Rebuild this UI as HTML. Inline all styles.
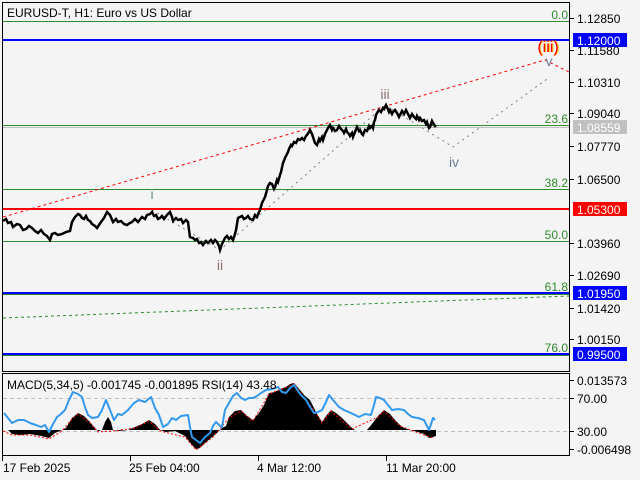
<!DOCTYPE html>
<html><head><meta charset="utf-8">
<style>
html,body{margin:0;padding:0;background:#f4f4f4;}
svg{display:block;font-family:"Liberation Sans","DejaVu Sans",sans-serif;}
</style></head>
<body>
<svg width="640" height="480" viewBox="0 0 640 480" xmlns="http://www.w3.org/2000/svg">
<rect width="640" height="480" fill="#f4f4f4"/>
<rect x="2.5" y="2.5" width="567" height="369" fill="none" stroke="#000" stroke-width="1"/>
<rect x="2.5" y="373.5" width="567" height="82" fill="none" stroke="#000" stroke-width="1"/>

<g stroke="#2e8b2e" stroke-width="1">
<line x1="3" y1="21.5" x2="569" y2="21.5"/>
<line x1="3" y1="125.5" x2="569" y2="125.5"/>
<line x1="3" y1="189.5" x2="569" y2="189.5"/>
<line x1="3" y1="241.5" x2="569" y2="241.5"/>
<line x1="3" y1="294.5" x2="569" y2="294.5"/>
<line x1="3" y1="355.5" x2="569" y2="355.5"/>
</g>
<line x1="3" y1="127.5" x2="569" y2="127.5" stroke="#c0c0c0" stroke-width="1"/>
<line x1="3" y1="40" x2="569" y2="40" stroke="#0000ff" stroke-width="2"/>
<line x1="3" y1="293" x2="569" y2="293" stroke="#0000ff" stroke-width="2"/>
<line x1="3" y1="354" x2="569" y2="354" stroke="#0000ff" stroke-width="2"/>
<line x1="3" y1="209" x2="569" y2="209" stroke="#ff0000" stroke-width="2"/>
<line x1="3" y1="318" x2="569" y2="296" stroke="#2e8b2e" stroke-width="1" stroke-dasharray="3,3"/>
<polyline points="3,217 545,60 569,72" fill="none" stroke="#ff0000" stroke-width="1" stroke-dasharray="3,3"/>
<polyline points="152,210 220,250 385,105 453,147 550,77" fill="none" stroke="#808080" stroke-width="1" stroke-dasharray="2,4"/>

<polyline fill="none" stroke="#000" stroke-width="2.5" stroke-linejoin="miter" points="3,221 6,219 8,223 11,222 13,227 17,224 20,225 23,230 26,229 29,226 32,228 35,231 38,233 41,230 44,234 47,236 50,240 52,234 55,233 58,235 62,234 66,232 70,231 72,222 75,217 78,214 80,215 82,218 84,219 86,216 88,220 90,221 92,224 95,226 97,228 99,225 101,222 104,218 107,212 109,214 110,215 113,222 116,219 118,222 121,221 124,224 127,225 130,223 132,222 135,219 138,222 142,217 145,219 147,215 150,214 152,212 154,216 156,215 158,219 160,218 162,216 164,219 167,215 170,212 172,217 173,221 176,218 178,220 181,219 183,223 186,220 188,222 189,230 190,237 193,238 195,240 197,239 199,243 201,242 203,245 206,241 208,243 211,240 213,243 215,240 217,242 219,246 220,250 222,244 225,238 227,236 229,239 231,237 233,240 235,234 236,230 237,224 238,218 240,217 242,216 244,219 246,218 248,216 250,219 253,220 255,215 257,217 259,212 260,210 262,203 264,199 265,197 267,190 268,186 270,183 272,184 274,189 275,187 277,180 278,182 280,175 281,172 283,163 285,158 286,156 288,152 289,149 291,145 292,146 294,142 296,143 298,139 300,140 302,138 304,140 306,136 307,135 309,132 310,130 312,134 313,137 315,143 317,145 319,139 320,141 322,137 323,140 325,134 326,132 328,128 330,125 332,130 333,128 335,131 337,130 339,126 341,129 343,131 344,133 346,129 347,132 349,134 350,136 352,133 353,137 355,132 357,127 359,131 360,130 362,134 363,135 365,130 367,131 369,126 370,128 372,126 373,128 374,122 375,120 376,115 377,113 379,110 381,112 383,108 384,109 386,105 387,107 389,112 390,110 392,114 393,112 395,110 397,113 399,117 400,115 402,111 404,114 406,110 407,112 409,116 410,118 412,114 414,117 416,119 417,116 419,120 420,118 422,121 424,120 426,124 427,122 429,128 430,127 432,121 433,123 435,126 436,125"/>

<g fill="#2e8b2e" font-size="12" text-anchor="end">
<text x="568" y="19">0.0</text>
<text x="568" y="123">23.6</text>
<text x="568" y="187">38.2</text>
<text x="568" y="239">50.0</text>
<text x="568" y="291">61.8</text>
<text x="568" y="352">76.0</text>
</g>
<g font-size="14" text-anchor="middle">
<text x="152" y="199" fill="#6f8f8f">i</text>
<text x="220" y="270" fill="#8a7070">ii</text>
<text x="385" y="99" fill="#8a7070">iii</text>
<text x="454" y="167" fill="#6a7f96">iv</text>
<text x="549" y="66" fill="#7080a0">v</text>
<text x="549" y="52" fill="#ffc000" font-size="16">(iii)</text>
<text x="548" y="52" fill="#ff0000" font-size="16">(iii)</text>
</g>

<text x="7" y="17" font-size="12" fill="#000">EURUSD-T, H1:  Euro vs US Dollar</text>

<g stroke="#000" stroke-width="1">
<line x1="570" y1="18.5" x2="574" y2="18.5"/><line x1="570" y1="50.5" x2="574" y2="50.5"/><line x1="570" y1="82.5" x2="574" y2="82.5"/><line x1="570" y1="113.5" x2="574" y2="113.5"/><line x1="570" y1="146.5" x2="574" y2="146.5"/><line x1="570" y1="179.5" x2="574" y2="179.5"/><line x1="570" y1="243.5" x2="574" y2="243.5"/><line x1="570" y1="275.5" x2="574" y2="275.5"/><line x1="570" y1="308.5" x2="574" y2="308.5"/><line x1="570" y1="339.5" x2="574" y2="339.5"/>
<line x1="570" y1="380.5" x2="574" y2="380.5"/><line x1="570" y1="398.5" x2="574" y2="398.5"/><line x1="570" y1="431.5" x2="574" y2="431.5"/><line x1="570" y1="449.5" x2="574" y2="449.5"/>
</g>
<g font-size="12" fill="#000">
<text x="577" y="23">1.12850</text>
<text x="577" y="55">1.11580</text>
<text x="577" y="87">1.10310</text>
<text x="577" y="118">1.09040</text>
<text x="577" y="151">1.07770</text>
<text x="577" y="184">1.06500</text>
<text x="577" y="248">1.03960</text>
<text x="577" y="280">1.02690</text>
<text x="577" y="313">1.01420</text>
<text x="577" y="344">1.00150</text>
</g>
<rect x="573" y="33" width="54" height="14" fill="#0000ff"/>
<text x="577" y="45" font-size="12" fill="#fff">1.12000</text>
<rect x="573" y="120" width="54" height="14" fill="#c0c0c0"/>
<text x="577" y="132" font-size="12" fill="#fff">1.08559</text>
<rect x="573" y="202" width="54" height="14" fill="#ff0000"/>
<text x="577" y="214" font-size="12" fill="#fff">1.05300</text>
<rect x="573" y="286" width="54" height="14" fill="#0000ff"/>
<text x="577" y="298" font-size="12" fill="#fff">1.01950</text>
<rect x="573" y="347" width="54" height="14" fill="#0000ff"/>
<text x="577" y="359" font-size="12" fill="#fff">0.99500</text>

<line x1="3" y1="398.5" x2="569" y2="398.5" stroke="#c0c0c0" stroke-dasharray="4,3"/>
<line x1="3" y1="431.5" x2="569" y2="431.5" stroke="#c0c0c0" stroke-dasharray="4,3"/>
<polygon fill="#000" points="3,430 8,430 12,434 20,435 30,434 41,436 49,438 55,433 62,430 66,428 72,418 78,413 84,416 90,422 95,428 98,431 102,430 105,422 108,417 111,422 113,430 120,431 128,430 135,427 142,424 149,420 155,424 160,430 166,432 175,431 185,436 192,445 196,449 200,448 206,442 212,437 217,433 222,428 226,426 229,417 235,411 241,410 247,416 253,420 259,413 264,405 269,393 275,392 280,389 286,387 290,384 294,383 300,390 305,396 310,400 316,412 322,422 326,416 331,410 336,413 342,418 347,423 352,428 355,430 367,430 372,424 378,416 384,410 390,414 395,420 400,425 404,428 410,430 418,432 424,434 429,438 433,437 436,436 436,430 3,430"/>
<polyline fill="none" stroke="#ff0000" stroke-width="1" stroke-dasharray="2,2" points="3,431 12,435 30,435 49,439 62,431 72,419 78,414 90,423 98,432 113,431 135,428 149,421 160,431 185,437 196,450 212,438 229,418 241,411 253,421 269,394 294,384 316,413 322,423 331,411 352,429 378,417 384,411 400,426 424,435 433,438"/>
<polyline fill="none" stroke="#3399ee" stroke-width="2" stroke-linejoin="round" points="4,413 8,418 12,423 18,420 24,420 30,423 36,425 41,427 45,425 49,432 53,424 57,417 61,414 65,410 69,400 73,392 78,394 82,397 85,407 88,415 92,418 98,417 102,410 106,400 110,410 114,420 118,414 122,415 128,410 134,403 139,400 145,402 151,397 155,408 159,415 163,427 168,424 172,418 176,420 181,416 188,415 190,427 192,437 196,440 200,443 205,437 210,433 213,426 216,422 219,425 222,427 225,410 229,403 233,396 237,393 241,398 245,400 249,398 253,398 257,396 261,393 266,390 272,389 278,387 282,392 286,393 290,388 294,385 300,394 306,400 310,407 314,413 318,412 322,410 326,402 329,395 333,400 339,407 344,410 351,413 355,415 359,417 365,414 371,415 374,405 376,397 380,398 384,400 388,405 392,410 398,409 404,410 408,414 412,417 418,418 424,420 427,426 429,430 431,424 433,418 435,420"/>
<text x="7" y="389" font-size="12" fill="#000">MACD(5,34,5) -0.001745 -0.001895 RSI(14) 43.48</text>
<g font-size="12" fill="#000">
<text x="577" y="385">0.013573</text>
<text x="577" y="403">70.00</text>
<text x="577" y="436">30.00</text>
<text x="577" y="454">-0.006498</text>
</g>
<g stroke="#000" stroke-width="1">
<line x1="2.5" y1="456" x2="2.5" y2="461"/><line x1="130.5" y1="456" x2="130.5" y2="461"/><line x1="258.5" y1="456" x2="258.5" y2="461"/><line x1="386.5" y1="456" x2="386.5" y2="461"/>
</g>
<g font-size="12" fill="#000">
<text x="3" y="472">17 Feb 2025</text>
<text x="129" y="472">25 Feb 04:00</text>
<text x="257" y="472">4 Mar 12:00</text>
<text x="386" y="472">11 Mar 20:00</text>
</g>
</svg>
</body></html>
